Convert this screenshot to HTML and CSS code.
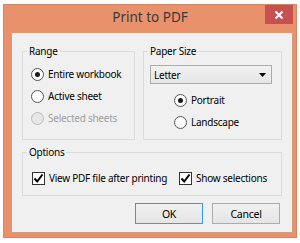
FILE: index.html
```html
<!DOCTYPE html>
<html lang="en">
<head>
    <meta charset="UTF-8">
    <meta name="viewport" content="width=device-width, initial-scale=1.0">
    <title>Print to PDF</title>
    <link rel="stylesheet" href="styles.css">
</head>
<body>
    <div class="window">
        <div class="titlebar">
            <span></span>
            <span class="title">Print to PDF</span>
            <button class="close" type="button" aria-label="Close">
                <svg width="10" height="10" viewBox="0 0 10 10">
                    <path d="M1.5 1.5 L8.5 8.5 M8.5 1.5 L1.5 8.5" stroke="#fff" stroke-width="2"/>
                </svg>
            </button>
        </div>

        <div class="content">
            <div class="top-row">
                <fieldset class="group range">
                    <legend>Range</legend>
                    <div class="group-body">
                        <div class="option">
                            <span class="radio checked"></span>
                            <span>Entire workbook</span>
                        </div>
                        <div class="option">
                            <span class="radio"></span>
                            <span>Active sheet</span>
                        </div>
                        <div class="option disabled">
                            <span class="radio"></span>
                            <span>Selected sheets</span>
                        </div>
                    </div>
                </fieldset>

                <fieldset class="group paper">
                    <legend>Paper Size</legend>
                    <div class="group-body">
                        <div class="select">
                            <span>Letter</span>
                            <svg width="7" height="4" viewBox="0 0 7 4"><path d="M0 0 H7 L3.5 4 Z" fill="#000"/></svg>
                        </div>
                        <div class="orientation">
                            <div class="option">
                                <span class="radio checked"></span>
                                <span>Portrait</span>
                            </div>
                            <div class="option">
                                <span class="radio"></span>
                                <span>Landscape</span>
                            </div>
                        </div>
                    </div>
                </fieldset>
            </div>

            <fieldset class="group options">
                <legend>Options</legend>
                <div class="group-body">
                    <div class="option">
                        <span class="check"><svg width="11" height="11" viewBox="0 0 11 11"><path d="M1.5 5.5 L4.2 8.5 L9.5 1.5" stroke="#000" stroke-width="2" fill="none"/></svg></span>
                        <span>View PDF file after printing</span>
                    </div>
                    <div class="option">
                        <span class="check"><svg width="11" height="11" viewBox="0 0 11 11"><path d="M1.5 5.5 L4.2 8.5 L9.5 1.5" stroke="#000" stroke-width="2" fill="none"/></svg></span>
                        <span>Show selections</span>
                    </div>
                </div>
            </fieldset>

            <div class="buttons">
                <button type="button" class="btn default">OK</button>
                <button type="button" class="btn">Cancel</button>
            </div>
        </div>
    </div>
</body>
</html>
```

FILE: styles.css
```css
* {
    box-sizing: border-box;
}

body {
    margin: 0;
    background: #fff;
    font-family: 'Noto Sans', Arial, sans-serif;
    font-size: 10px;
    letter-spacing: -0.25px;
    color: #000;
}

.window {
    margin: 4px 0 0 3px;
    width: 294px;
    height: 234px;
    background: #e9916a;
    border: 1px solid #d9845e;
    display: flex;
    flex-direction: column;
}

.titlebar {
    height: 27px;
    display: grid;
    grid-template-columns: 1fr auto 1fr;
    align-items: start;
}

.title {
    font-size: 13.5px;
    letter-spacing: 0;
    color: #3a3a3a;
    line-height: 25px;
}

.close {
    justify-self: end;
    margin-right: 3px;
    width: 28px;
    height: 19px;
    border: none;
    padding: 0;
    background: #c75050;
    display: flex;
    align-items: center;
    justify-content: center;
}

.content {
    margin: 0 3px 0 7px;
    height: 201px;
    background: #f0f0f0;
    border: 1px solid #d49a7d;
    padding: 12px 10px 0 10px;
}

.top-row {
    display: flex;
    gap: 8px;
}

.group {
    margin: 0;
    min-width: 0;
    border: 1px solid #dcdcdc;
    padding: 0;
}

.group legend {
    margin-left: 4px;
    padding: 0 2px;
    line-height: 13px;
}

.range {
    width: 113px;
}

.range .group-body {
    padding: 5px 0 10px 8px;
}

.paper {
    width: 139px;
}

.paper .group-body {
    padding: 7px 9px 5px 6px;
}

.option {
    height: 22px;
    display: flex;
    align-items: center;
    gap: 4px;
    white-space: nowrap;
}

.option.disabled {
    color: #a0a0a0;
}

.radio {
    width: 13px;
    height: 13px;
    border-radius: 50%;
    border: 1px solid #555;
    background: #fff;
    display: flex;
    align-items: center;
    justify-content: center;
}

.radio.checked::after {
    content: "";
    width: 5px;
    height: 5px;
    border-radius: 50%;
    background: #1a1a1a;
}

.disabled .radio {
    border-color: #bcbcbc;
    background: #e6e6e6;
}

.select {
    height: 19px;
    border: 1px solid #acacac;
    background: linear-gradient(#f2f2f2, #e5e5e5);
    display: flex;
    align-items: center;
    justify-content: space-between;
    padding: 0 5px 0 3px;
    margin-bottom: 5px;
}

.orientation {
    padding-left: 24px;
}

.options {
    margin-top: 6px;
    width: 260px;
}

.options .group-body {
    padding: 8px 0 6px 9px;
    display: flex;
    gap: 12px;
}

.check {
    width: 13px;
    height: 13px;
    border: 1px solid #333;
    background: #fff;
    display: flex;
    align-items: center;
    justify-content: center;
}

.buttons {
    display: flex;
    justify-content: flex-end;
    gap: 9px;
    margin-top: 7px;
    padding-right: 2px;
}

.btn {
    width: 68px;
    height: 21px;
    font-family: inherit;
    font-size: 10.5px;
    letter-spacing: inherit;
    color: #000;
    border: 1px solid #acacac;
    background: linear-gradient(#f0f0f0, #e5e5e5);
    padding: 0;
}

.btn.default {
    border-color: #3399ff;
}
```
